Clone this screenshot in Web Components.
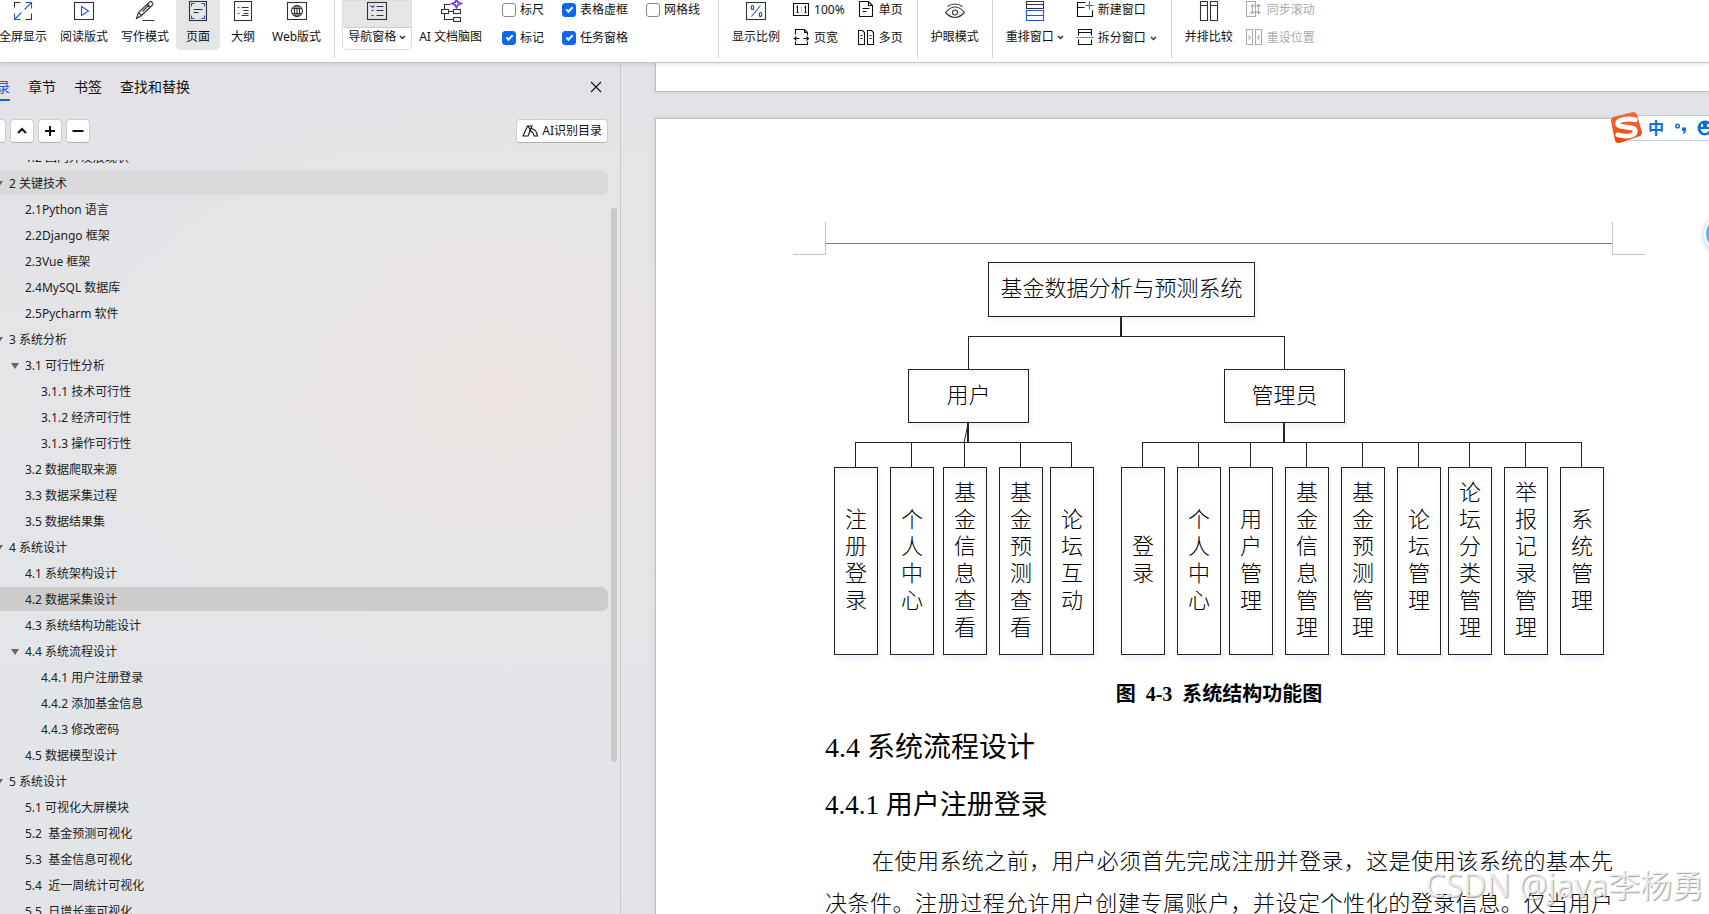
<!DOCTYPE html>
<html lang="zh-CN">
<head>
<meta charset="utf-8">
<title>文档编辑器</title>
<style>
html, body{
    height: 100%;
    margin: 0;
}
body{
    overflow: hidden;
    color: #111;
    font: 12px/16px "Noto Sans", "Noto Sans CJK SC", sans-serif;
}
</style>
</head>
<body>
<doc-app></doc-app>
<script>
const ICONS = {
    fullscreen: `<path d="M1 7V2h6M12 19h6v-6"/><g class="b"><path d="M11 9l7-7M12 2h6v6M8 12l-7 7M1 13v6h6"/></g>`,
    read: `<rect x="0" y="2" width="19" height="17"/><path class="b" d="M7 6l7 4.500-7 4.500z"/>`,
    write: `<path d="M1 18l2-6L14 1.500q2-1 3 .5t0 2.500L6 15zM3 12l3 3M11.500 4l3 3M14 4L7 11M7 20h12"/>`,
    page: `<rect x="1" y="1" width="17" height="19"/><path d="M5 9h9M5 12h5"/><path class="b" d="M3 6V3h3M13 3h3v3M3 15v3h3M13 18h3v-3"/>`,
    outline: `<rect x="1" y="1" width="17" height="19"/><path d="M8 7h7M10 10h5M10 13h5M8 15h7"/><path class="b" d="M4 7h2M4 13h2"/>`,
    web: `<rect x="0" y="2" width="19" height="17"/><circle cx="9.500" cy="10.500" r="5.500"/><ellipse cx="9.500" cy="10.500" rx="2.500" ry="5.500"/><path d="M4.500 8h10M4.500 13h10M9.500 5v11"/>`,
    nav: `<rect x="0" y="2" width="19" height="17"/><path class="b" d="M3 5l2 2 2-2"/><path d="M9 6h7M9 10h7M9 15h7M4 10h2M4 15h2"/>`,
    mind: `<path d="M3 9V4h6M3 13v6h9M7 11h5"/><rect x="0" y="9" width="7" height="4"/><rect x="12" y="9" width="7" height="4"/><rect x="12" y="17" width="7" height="4"/><path stroke="#7a3be0" stroke-width="1.800" d="M15 -1l1.500 3L19.500 3l-3 1.500L15 7l-1.500-2.500L10.500 3l3-1z"/>`,
    zoom: `<rect x="0" y="2" width="19" height="17"/><path class="b" d="M14 5L5 16"/><ellipse cx="6" cy="7" rx="1.300" ry="2"/><ellipse cx="14" cy="14" rx="1.300" ry="2"/>`,
    eye: `<path d="M0 12q9.500-11 19 0q-9.500 10-19 0zM2 6q7.500-5 15 0"/><circle cx="9.500" cy="12" r="2.500"/>`,
    arrange: `<path d="M1 8V1h17v7zM1 4h17"/><path class="b" d="M1 10h17v10H1zM1 15h17"/>`,
    compare: `<path d="M1 1h7v19H1zM11 1h7v19h-7zM1 5h7M11 5h7"/>`,
    one: `<path d="M0 2h15v12H0zM3 6l1-1v6M11 6l1-1v6M3 11h2M11 11h2"/><path class="b" d="M8 6v1M8 9v1"/>`,
    width: `<path d="M2 5V0h9l3 3v3M11 0v3h3M2 12v3h12v-3M0 9h6M3 7L1 9l2 2M15 9h-5M13 7l2 2-2 2"/>`,
    single: `<path d="M1 0h9l4 4v11H1zM10 0v4h4M4 7h7M4 10h4"/>`,
    multi: `<path d="M0 1h4l2 2v12H0zM9 1h4l2 2v12H9zM2 6h2M2 9h2M11 6h2M11 9h2"/>`,
    newwin: `<path d="M8 1H0v14h15V9M0 6h7"/><path stroke="#14895c" d="M12 0v8M8 4h8"/>`,
    split: `<path d="M1 6V0h13v6M1 3h13M1 10v5h13v-5"/><path class="b" stroke-dasharray="2 1" d="M-1 8h17"/>`,
    sync: `<path d="M0 0h9v15H0zM6 3v9M4 5l2-2 2 2M4 10l2 2 2-2M12 3v9M10 5l2-2 2 2M10 10l2 2 2-2"/>`,
    reset: `<path d="M0 0h6v15H0zM9 0h6v15H9zM2 6l2 2-2 2M13 6l-2 2 2 2"/>`,
    up: `<path stroke-width="2" d="M4 10l4-4 4 4"/>`,
    down: `<path stroke-width="2" d="M4 6l4 4 4-4"/>`,
    plus: `<path stroke-width="2" d="M8 3v10M3 8h10"/>`,
    minus: `<path stroke-width="2" d="M2.500 8h11"/>`,
    close: `<path d="M3 3l10 10M13 3L3 13"/>`,
    ai: `<path d="M1 13L5.500 3H10l-4 10zM9 5.500c4 .5 6 4 6.500 7.500H12c-.5-3-2.500-5-5-5M6 3l3 5"/>`
};

// ribbon icons are drawn on whole units, so their view box is shifted by half a unit to stay crisp
function icon(name, size, shift = 0){
    return `<svg class="icon" width="${size}" height="${size}" viewBox="${-shift} ${-shift} ${size} ${size}" aria-hidden="true">${ICONS[name]}</svg>`;
}

const iconStyle = `
*{
    box-sizing: border-box;
}
.icon{
    display: block;
    flex: none;
    overflow: visible;
    fill: none;
    stroke: currentColor;
    stroke-width: 1.1;
}
.icon .b{
    stroke: #2456d6;
}
button{
    margin: 0;
    padding: 0;
    border: 0;
    background: none;
    color: inherit;
    font: inherit;
    white-space: nowrap;
}
`;

const chevron = `<svg width="7" height="5" viewBox="0 0 7 5" fill="none" stroke="#333" stroke-width="1.5"><path d="M1 1l2.500 2.500L6 1"/></svg>`;

// Large button of the ribbon: icon above label
class ToolButton extends HTMLElement {
    constructor(){
        super();
        this.attachShadow({mode:'open'});
    }
    connectedCallback(){
        this.shadowRoot.innerHTML = `
<style>
${iconStyle}
:host{
    display: block;
    flex: none;
}
button{
    display: flex;
    flex-direction: column;
    align-items: center;
    gap: 9px;
    min-width: 44px;
    height: 50px;
    padding: 0 6px 4px;
}
.icon{
    color: #333;
}
.label{
    display: flex;
    align-items: center;
    gap: 3px;
}
:host([active]) button{
    background: #e5e5e5;
    border-radius: 0 0 5px 5px;
}
:host([split]) button{
    background: linear-gradient(#e5e5e5 27px, #ccc 27px, #ccc 28px, #fff 28px);
    box-shadow: inset 0 0 0 1px #ddd;
    border-radius: 0 0 5px 5px;
}
</style>
<button type="button">${icon(this.getAttribute('icon'), 20, .5)}<span class="label"><slot></slot>${this.hasAttribute('menu') ? chevron : ''}</span></button>`;
    }
}
customElements.define('tool-button', ToolButton);

// Small button of the ribbon: icon beside label
class ToolItem extends HTMLElement {
    constructor(){
        super();
        this.attachShadow({mode:'open'});
    }
    connectedCallback(){
        this.shadowRoot.innerHTML = `
<style>
${iconStyle}
:host{
    display: block;
}
button{
    display: flex;
    align-items: center;
    gap: 4px;
    height: 20px;
}
button:disabled{
    color: #aaa;
}
svg + svg{
    margin-left: 3px;
}
</style>
<button type="button" ${this.hasAttribute('disabled') ? 'disabled' : ''}>${icon(this.getAttribute('icon'), 16, -.5)}<slot></slot>${this.hasAttribute('menu') ? chevron : ''}</button>`;
    }
}
customElements.define('tool-item', ToolItem);

class ToolCheck extends HTMLElement {
    constructor(){
        super();
        this.attachShadow({mode:'open'});
    }
    connectedCallback(){
        this.shadowRoot.innerHTML = `
<style>
:host{
    display: block;
}
label{
    display: flex;
    align-items: center;
    gap: 4px;
    height: 20px;
    white-space: nowrap;
}
input{
    appearance: none;
    box-sizing: border-box;
    width: 14px;
    height: 14px;
    margin: 0;
    border: 1px solid #888;
    border-radius: 3px;
    background: #fff;
}
input:checked{
    display: grid;
    place-items: center;
    border-color: #0a68f5;
    background: #0a68f5;
}
input:checked::before{
    content: "";
    width: 7px;
    height: 4px;
    margin-bottom: 3px;
    box-sizing: border-box;
    border: solid #fff;
    border-width: 0 0 2px 2px;
    rotate: -45deg;
}
</style>
<label><input type="checkbox" ${this.hasAttribute('checked') ? 'checked' : ''}><slot></slot></label>`;
    }
}
customElements.define('tool-check', ToolCheck);

const ribbonTemplate = document.createElement('template');
ribbonTemplate.innerHTML = `
<style>
:host{
    display: flex;
    flex: none;
    height: 62px;
    background: #fff;
    border-bottom: 1px solid #c4c6c6;
    box-shadow: 0 1px 4px rgba(0, 0, 0, .12);
    position: relative;
    z-index: 1;
}
.group{
    display: flex;
    gap: 1px;
    height: 58px;
    padding: 0 7px;
    border-right: 1px solid #d5d5d5;
}
.group:first-of-type{
    margin-left: -14px;
}
.group:last-of-type{
    border: 0;
}
.grid{
    display: grid;
    grid-template-rows: 20px 20px;
    grid-auto-flow: column;
    align-content: start;
    gap: 8px 14px;
    margin: 0 7px;
}
.checks{
    column-gap: 18px;
    margin: 0 11px 0 13px;
}
</style>
<div class="group">
    <tool-button icon="fullscreen">全屏显示</tool-button>
    <tool-button icon="read">阅读版式</tool-button>
    <tool-button icon="write">写作模式</tool-button>
    <tool-button icon="page" active>页面</tool-button>
    <tool-button icon="outline">大纲</tool-button>
    <tool-button icon="web">Web版式</tool-button>
</div>
<div class="group">
    <tool-button icon="nav" split menu>导航窗格</tool-button>
    <tool-button icon="mind">AI 文档脑图</tool-button>
    <div class="grid checks">
        <tool-check>标尺</tool-check>
        <tool-check checked>标记</tool-check>
        <tool-check checked>表格虚框</tool-check>
        <tool-check checked>任务窗格</tool-check>
        <tool-check>网格线</tool-check>
    </div>
</div>
<div class="group">
    <tool-button icon="zoom">显示比例</tool-button>
    <div class="grid">
        <tool-item icon="one">100%</tool-item>
        <tool-item icon="width">页宽</tool-item>
        <tool-item icon="single">单页</tool-item>
        <tool-item icon="multi">多页</tool-item>
    </div>
</div>
<div class="group">
    <tool-button icon="eye">护眼模式</tool-button>
</div>
<div class="group">
    <tool-button icon="arrange" menu>重排窗口</tool-button>
    <div class="grid">
        <tool-item icon="newwin">新建窗口</tool-item>
        <tool-item icon="split" menu>拆分窗口</tool-item>
    </div>
</div>
<div class="group">
    <tool-button icon="compare">并排比较</tool-button>
    <div class="grid">
        <tool-item icon="sync" disabled>同步滚动</tool-item>
        <tool-item icon="reset" disabled>重设位置</tool-item>
    </div>
</div>
`;

class RibbonBar extends HTMLElement {
    constructor(){
        super();
        this.attachShadow({mode:'open'});
        this.shadowRoot.appendChild(ribbonTemplate.content.cloneNode(true));
    }
}
customElements.define('ribbon-bar', RibbonBar);

// level, text, state (o = open branch, h = hover, s = selected)
const OUTLINE = [
    [1, '1.2 国内外发展现状', ''],
    [0, '2 关键技术', 'oh'],
    [1, '2.1Python 语言', ''],
    [1, '2.2Django 框架', ''],
    [1, '2.3Vue 框架', ''],
    [1, '2.4MySQL 数据库', ''],
    [1, '2.5Pycharm 软件', ''],
    [0, '3 系统分析', 'o'],
    [1, '3.1 可行性分析', 'o'],
    [2, '3.1.1 技术可行性', ''],
    [2, '3.1.2 经济可行性', ''],
    [2, '3.1.3 操作可行性', ''],
    [1, '3.2 数据爬取来源', ''],
    [1, '3.3 数据采集过程', ''],
    [1, '3.5 数据结果集', ''],
    [0, '4 系统设计', 'o'],
    [1, '4.1 系统架构设计', ''],
    [1, '4.2 数据采集设计', 's'],
    [1, '4.3 系统结构功能设计', ''],
    [1, '4.4 系统流程设计', 'o'],
    [2, '4.4.1 用户注册登录', ''],
    [2, '4.4.2 添加基金信息', ''],
    [2, '4.4.3 修改密码', ''],
    [1, '4.5 数据模型设计', ''],
    [0, '5 系统设计', 'o'],
    [1, '5.1 可视化大屏模块', ''],
    [1, '5.2  基金预测可视化', ''],
    [1, '5.3  基金信息可视化', ''],
    [1, '5.4  近一周统计可视化', ''],
    [1, '5.5  日增长率可视化', '']
];

class OutlineItem extends HTMLElement {
    constructor(){
        super();
        this.attachShadow({mode:'open'});
        this.shadowRoot.innerHTML = `
<style>
:host{
    display: block;
}
a{
    display: flex;
    align-items: center;
    box-sizing: border-box;
    height: 24px;
    padding-top: 2px;
    padding-left: calc(var(--level) * 16px - 5px);
    border-radius: 0 7px 7px 0;
    color: #222;
    text-decoration: none;
    white-space: pre;
}
:host([level="0"]) a{
    margin-left: -5px;
    padding-left: 0;
}
.arrow{
    width: 14px;
    flex: none;
}
.arrow svg{
    display: none;
}
:host([state*="o"]) svg{
    display: block;
}
:host([state*="h"]) a{
    background: #d9d8da;
}
:host([state="s"]) a{
    background: #cecccd;
}
</style>
<a href="#"><span class="arrow"><svg width="8" height="6" viewBox="0 0 8 6" fill="#666"><path d="M0 0h8L4 6z"/></svg></span><slot></slot></a>`;
    }
    connectedCallback(){
        this.style.setProperty('--level', this.getAttribute('level'));
    }
}
customElements.define('outline-item', OutlineItem);

class NavPane extends HTMLElement {
    constructor(){
        super();
        this.attachShadow({mode:'open'});
        this.shadowRoot.innerHTML = `
<style>
${iconStyle}
:host{
    display: flex;
    flex-direction: column;
    flex: none;
    width: 621px;
    box-sizing: border-box;
    border-right: 1px solid #c9c8ca;
    overflow: hidden;
}
header{
    display: flex;
    align-items: center;
    justify-content: space-between;
    flex: none;
    height: 48px;
    padding-right: 16px;
    font-size: 14px;
}
.tabs{
    display: flex;
    gap: 18px;
    margin-left: -18px;
}
.tabs button{
    height: 28px;
    border-bottom: 2px solid transparent;
    border-top: 2px solid transparent;
}
.tabs .on{
    color: #1f5fd0;
    border-bottom-color: #1f5fd0;
}
.tools{
    display: flex;
    gap: 4px;
    flex: none;
    margin: 8px 12px 17px -18px;
}
.tools button{
    display: flex;
    align-items: center;
    justify-content: center;
    gap: 4px;
    min-width: 24px;
    height: 24px;
    background: #fff;
    border: 1px solid #cdcdd0;
    border-bottom-color: #b0b0b3;
    border-radius: 4px;
}
.tools .ai{
    margin-left: auto;
    padding: 0 5px;
}
.view{
    display: flex;
    flex: 1;
    min-height: 0;
    overflow: hidden;
}
nav{
    display: flex;
    flex-direction: column;
    flex: 1;
    gap: 2px;
    margin-top: -15px;
}
.bar{
    width: 6px;
    height: 554px;
    margin: 48px 3px 0;
    border-radius: 3px;
    background: #cbc8c9;
}
</style>
<header>
    <div class="tabs">
        <button type="button" class="on">目录</button>
        <button type="button">章节</button>
        <button type="button">书签</button>
        <button type="button">查找和替换</button>
    </div>
    <button type="button" aria-label="关闭">${icon('close', 16)}</button>
</header>
<div class="tools">
    <button type="button" aria-label="下移">${icon('down', 16)}</button>
    <button type="button" aria-label="上移">${icon('up', 16)}</button>
    <button type="button" aria-label="展开">${icon('plus', 16)}</button>
    <button type="button" aria-label="收起">${icon('minus', 16)}</button>
    <button type="button" class="ai">${icon('ai', 16)}AI识别目录</button>
</div>
<div class="view">
    <nav>${OUTLINE.map(([level, text, state]) => `<outline-item level="${level}" state="${state}">${text}</outline-item>`).join('')}</nav>
    <div class="bar"></div>
</div>`;
    }
}
customElements.define('nav-pane', NavPane);

class ChartNode extends HTMLElement {
    constructor(){
        super();
        this.attachShadow({mode:'open'});
        this.shadowRoot.innerHTML = `
<style>
:host{
    position: absolute;
    display: flex;
    align-items: center;
    justify-content: center;
    box-sizing: border-box;
    padding-bottom: 2px;
    border: 1px solid #222;
    background: #fff;
    box-shadow: 2px 4px 4px rgba(120, 160, 220, .12), inset 0 4px 4px rgba(120, 150, 230, .08);
    font-size: 22px;
    font-weight: 300;
    line-height: 27px;
    white-space: nowrap;
}
:host([leaf]) span{
    width: 22px;
    white-space: normal;
    word-break: break-all;
    line-break: anywhere;
}
</style>
<span><slot></slot></span>`;
    }
}
customElements.define('chart-node', ChartNode);

// x of the left edge, label
const USER_LEAVES = [[9, '注册登录'], [65, '个人中心'], [118, '基金信息查看'], [174, '基金预测查看'], [225, '论坛互动']];
const ADMIN_LEAVES = [[296, '登录'], [352, '个人中心'], [404, '用户管理'], [460, '基金信息管理'], [516, '基金预测管理'], [572, '论坛管理'], [623, '论坛分类管理'], [679, '举报记录管理'], [735, '系统管理']];

class StructureChart extends HTMLElement {
    constructor(){
        super();
        this.attachShadow({mode:'open'});
        const leaves = [...USER_LEAVES, ...ADMIN_LEAVES];
        const drops = leaves.map(([x]) => `M${x + 21.5} 187v25`).join('');
        this.shadowRoot.innerHTML = `
<style>
:host{
    display: block;
    position: relative;
    height: 420px;
    color: #000;
}
svg{
    display: block;
}
.root{
    left: 163px;
    top: 7px;
    width: 267px;
    height: 55px;
}
.role{
    top: 114px;
    width: 121px;
    height: 54px;
}
[leaf]{
    top: 212px;
    width: 44px;
    height: 188px;
}
</style>
<svg width="787" height="420" fill="none" stroke="#222" shape-rendering="crispEdges">
    <path d="M143.500 115V81.500h316V115M30 187.500h217M317 187.500h440"/>
    <path stroke-width="2" d="M296 62v19M143 168v20M459 168v20"/>
    <path d="M143 169l-4 19" shape-rendering="auto"/>
    <path d="${drops}"/>
</svg>
<chart-node class="root">基金数据分析与预测系统</chart-node>
<chart-node class="role" style="left: 83px">用户</chart-node>
<chart-node class="role" style="left: 399px">管理员</chart-node>
${leaves.map(([x, text]) => `<chart-node leaf style="left: ${x}px">${text}</chart-node>`).join('')}`;
    }
}
customElements.define('structure-chart', StructureChart);

const pageTemplate = document.createElement('template');
pageTemplate.innerHTML = `
<style>
:host{
    display: flex;
    flex-direction: column;
    flex: 1;
    min-width: 0;
    gap: 26px;
    padding-left: 34px;
    overflow: hidden;
}
.previous{
    flex: none;
    height: 28px;
    background: #fff;
    border: solid #bdbdbf;
    border-width: 0 0 1px 1px;
    box-shadow: 0 0 6px rgba(0, 0, 0, .08);
}
.page{
    flex: none;
    padding: 103px 64px 40px 137px;
    background: #fff;
    border: solid #bdbdbf;
    border-width: 1px 0 0 1px;
    box-shadow: 0 0 6px rgba(0, 0, 0, .08);
}
.header{
    display: grid;
    grid-template-columns: 33px 1fr 33px;
    height: 33px;
}
.header i{
    border: solid #c4c4c4;
    border-width: 0 1px 1px 0;
}
.header i:last-child{
    border-width: 0 0 1px 1px;
}
.header hr{
    width: 100%;
    height: 1px;
    margin: 21px 0 0;
    border: 0;
    background: #777;
}
article{
    padding: 0 32px;
    color: #000;
    font-family: "Liberation Serif", "Noto Sans CJK SC", serif;
}
figure{
    margin: 0;
}
figcaption{
    font-size: 20px;
    font-weight: bold;
    line-height: 38px;
    text-align: center;
    white-space: pre;
}
h2, h3{
    margin: 13px 0 0;
    font-size: 28px;
    font-weight: normal;
    line-height: 44px;
}
h3{
    font-size: 27px;
}
p{
    margin: 14px 0 0;
    font-size: 22px;
    font-weight: 300;
    line-height: 42px;
    text-indent: 47px;
    text-align: justify;
    text-align-last: justify;
}
</style>
<div class="previous"></div>
<div class="page">
    <div class="header"><i></i><hr><i></i></div>
    <article>
        <figure>
            <structure-chart></structure-chart>
            <figcaption>图  4-3  系统结构功能图</figcaption>
        </figure>
        <h2>4.4 系统流程设计</h2>
        <h3>4.4.1 用户注册登录</h3>
        <p>在使用系统之前，用户必须首先完成注册并登录，这是使用该系统的基本先决条件。注册过程允许用户创建专属账户，并设定个性化的登录信息。仅当用户</p>
    </article>
</div>
`;

class DocPage extends HTMLElement {
    constructor(){
        super();
        this.attachShadow({mode:'open'});
        this.shadowRoot.appendChild(pageTemplate.content.cloneNode(true));
    }
}
customElements.define('doc-page', DocPage);

// Floating bar of the input method
class ImeBar extends HTMLElement {
    constructor(){
        super();
        this.attachShadow({mode:'open'});
        this.shadowRoot.innerHTML = `
<style>
:host{
    position: absolute;
    z-index: 2;
    top: 111px;
    right: -8px;
    display: flex;
    align-items: center;
    height: 34px;
    color: #0a70dc;
}
.logo{
    position: relative;
    margin-right: -14px;
}
.bar{
    display: flex;
    align-items: center;
    gap: 10px;
    height: 26px;
    box-sizing: border-box;
    padding: 0 4px 0 19px;
    background: #fff;
    border: solid #b9cfe8;
    border-width: 1px 0;
    font-size: 16px;
    font-weight: bold;
}
svg{
    display: block;
}
</style>
<svg class="logo" width="33" height="33" viewBox="0 0 34 34"><defs><linearGradient id="g" x2="0" y2="1"><stop stop-color="#f8683c"/><stop offset="1" stop-color="#f04408"/></linearGradient></defs><path fill="url(#g)" d="M4 5L24 0q3 0 4 3l5 18q0 3-3 4L10 32q-4 0-5-3L1 9q0-3 3-4z"/><path fill="none" stroke="#fff" stroke-width="5" stroke-linecap="round" d="M26 8C18 6 7 8 8 12.500S26 14 26 19.500 15 26 8 23.500"/></svg>
<div class="bar"><span>中</span>
<svg width="13" height="12" viewBox="0 0 13 12"><circle cx="3.500" cy="4" r="1.800" fill="none" stroke="currentColor" stroke-width="1.500"/><path fill="currentColor" d="M8 5.500h4V8q0 3-3 4v-1.500q1-.5 1-1.500H8z"/></svg>
<svg width="16" height="16" viewBox="0 0 16 16"><circle cx="8" cy="8" r="7.500" fill="currentColor"/><g fill="#fff"><rect x="4" y="4" width="2" height="3"/><rect x="10" y="4" width="2" height="3"/><path d="M3.500 9h9q-1 4-4.500 4t-4.500-4z"/></g></svg></div>`;
    }
}
customElements.define('ime-bar', ImeBar);

const appTemplate = document.createElement('template');
appTemplate.innerHTML = `
<style>
:host{
    display: flex;
    flex-direction: column;
    position: relative;
    height: 100%;
    overflow: hidden;
}
main{
    display: flex;
    flex: 1;
    min-height: 0;
    background: radial-gradient(ellipse 420px 300px at 500px 330px, #ebe4e2, rgba(235, 228, 226, 0)), linear-gradient(#e3e3e7, #e5e5e8 40%, #e2e4e8);
}
.bubble{
    position: absolute;
    top: 214px;
    right: -35px;
    width: 40px;
    height: 40px;
    box-sizing: border-box;
    border: 2px solid #fff;
    border-radius: 50%;
    background: #56b8fb;
    box-shadow: 0 1px 5px rgba(60, 120, 190, .45);
}
.watermark{
    position: absolute;
    right: 5px;
    bottom: 8px;
    color: rgba(255, 255, 255, .75);
    font-size: 32px;
    line-height: 42px;
    text-shadow: 1px 1px 1px rgba(110, 110, 110, .65);
    white-space: nowrap;
}
</style>
<ribbon-bar></ribbon-bar>
<main>
    <nav-pane></nav-pane>
    <doc-page></doc-page>
</main>
<ime-bar></ime-bar>
<div class="bubble"></div>
<div class="watermark">CSDN @java李杨勇</div>
`;

class DocApp extends HTMLElement {
    constructor(){
        super();
        this.attachShadow({mode:'open'});
        this.shadowRoot.appendChild(appTemplate.content.cloneNode(true));
    }
}
customElements.define('doc-app', DocApp);
</script>
</body>
</html>
